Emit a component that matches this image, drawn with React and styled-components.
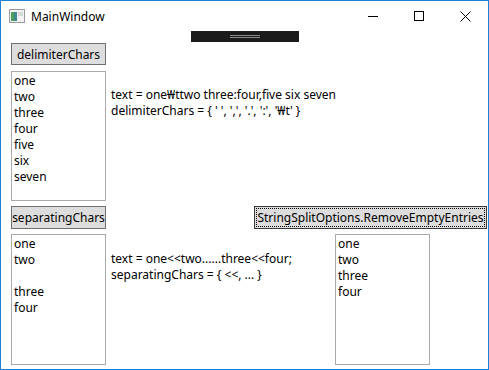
import React from 'react'
import styled, { createGlobalStyle } from 'styled-components'

const Global = createGlobalStyle`
  html, body { margin: 0; padding: 0; background: #ffffff; }
  body { font-family: 'Noto Sans', 'Segoe UI', sans-serif; }
`

const Frame = styled.div`
  width: 489px;
  height: 370px;
  box-sizing: border-box;
  border: 1px solid #1a82d8;
  background: #ffffff;
  display: flex;
  flex-direction: column;
  overflow: hidden;
`

const TitleBar = styled.div`
  height: 30px;
  display: flex;
  align-items: center;
  flex-shrink: 0;
`

const AppIcon = styled.svg`
  margin-left: 8px;
  width: 16px;
  height: 14px;
`

const Title = styled.span`
  margin-left: 6px;
  font-size: 12px;
  color: #000;
  flex: 1;
`

const Caption = styled.div`
  width: 46px;
  height: 30px;
  display: flex;
  align-items: center;
  justify-content: center;
`

const Content = styled.div`
  flex: 1;
  display: flex;
  flex-direction: column;
  padding: 0 1px 4px 10px;
  font-size: 12px;
  color: #000;
`

const Grip = styled.div`
  align-self: center;
  width: 108px;
  height: 11px;
  background: #1b1b1b;
  display: flex;
  flex-direction: column;
  align-items: center;
  justify-content: center;
  gap: 1px;
  margin-left: -9px;
`

const GripLine = styled.div`
  width: 30px;
  height: 1px;
  background: #8a8a8a;
`

const ButtonRow = styled.div`
  display: flex;
  justify-content: space-between;
  align-items: flex-start;
  margin-top: ${p => p.$top}px;
`

const Button = styled.div`
  width: ${p => p.$w}px;
  height: ${p => p.$h}px;
  box-sizing: border-box;
  background: #dddddd;
  border: 1px solid ${p => (p.$focus ? '#3a3a3a' : '#707070')};
  display: flex;
  align-items: center;
  justify-content: center;
  font-size: 12px;
  position: relative;
  ${p =>
    p.$focus &&
    `&::after {
      content: '';
      position: absolute;
      inset: 1px;
      border: 1px dotted #000;
    }`}
`

const Row = styled.div`
  display: flex;
  margin-top: ${p => p.$top}px;
`

const ListBox = styled.div`
  width: 95px;
  height: ${p => p.$h}px;
  box-sizing: border-box;
  border: 1px solid #ababab;
  padding: 1px 2px;
  flex-shrink: 0;
`

const Item = styled.div`
  height: 16px;
  line-height: 16px;
  white-space: pre;
`

const Info = styled.div`
  margin-left: 5px;
  margin-top: ${p => p.$top}px;
  line-height: 16px;
  width: 224px;
  white-space: pre;
`

const List = ({ items, h }) => (
  <ListBox $h={h}>
    {items.map((t, i) => (
      <Item key={i}>{t || ' '}</Item>
    ))}
  </ListBox>
)

export default function App() {
  return (
    <>
      <Global />
      <Frame>
        <TitleBar>
          <AppIcon viewBox="0 0 16 14">
            <rect x="0.5" y="0.5" width="15" height="13" fill="#f2f2f2" stroke="#9a9a9a" />
            <rect x="2" y="3" width="6" height="9" fill="#3d8a8c" />
            <rect x="2" y="3" width="3" height="9" fill="#4d9e5a" />
            <rect x="9" y="3" width="5" height="4" fill="#d8d8d8" />
          </AppIcon>
          <Title>MainWindow</Title>
          <Caption>
            <svg width="10" height="10" viewBox="0 0 10 10">
              <path d="M0 5.5h10" stroke="#000" strokeWidth="1" />
            </svg>
          </Caption>
          <Caption>
            <svg width="10" height="10" viewBox="0 0 10 10">
              <rect x="0.5" y="0.5" width="9" height="9" fill="none" stroke="#000" />
            </svg>
          </Caption>
          <Caption>
            <svg width="11" height="11" viewBox="0 0 11 11">
              <path d="M0.5 0.5l10 10M10.5 0.5l-10 10" stroke="#000" strokeWidth="1" />
            </svg>
          </Caption>
        </TitleBar>
        <Content>
          <Grip>
            <GripLine />
            <GripLine />
          </Grip>
          <ButtonRow $top={1}>
            <Button $w={95} $h={22}>delimiterChars</Button>
          </ButtonRow>
          <Row $top={6}>
            <List h={130} items={['one', 'two', 'three', 'four', 'five', 'six', 'seven']} />
            <Info $top={16}>
              <div>text = one₩ttwo three:four,five six seven</div>
              <div>delimiterChars = {"{ ' ', ',', '.', ':', '₩t' }"}</div>
            </Info>
          </Row>
          <ButtonRow $top={5}>
            <Button $w={95} $h={23}>separatingChars</Button>
            <Button $w={233} $h={23} $focus>StringSplitOptions.RemoveEmptyEntries</Button>
          </ButtonRow>
          <Row $top={5}>
            <List h={131} items={['one', 'two', '', 'three', 'four']} />
            <Info $top={17}>
              <div>text = one&lt;&lt;two......three&lt;&lt;four;</div>
              <div>separatingChars = {'{ <<, ... }'}</div>
            </Info>
            <List h={131} items={['one', 'two', 'three', 'four']} />
          </Row>
        </Content>
      </Frame>
    </>
  )
}
